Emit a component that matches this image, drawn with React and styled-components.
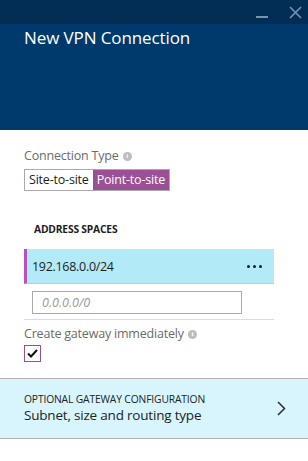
import React from "react";
import styled, { createGlobalStyle } from "styled-components";

const Global = createGlobalStyle`
  html, body { margin: 0; padding: 0; background: #fff; }
  body { font-family: "Open Sans", "Noto Sans", sans-serif; }
  * { box-sizing: border-box; }
`;

const Blade = styled.div`
  width: 308px;
  height: 461px;
  background: #fff;
  display: flex;
  flex-direction: column;
  overflow: hidden;
`;

const TopBar = styled.div`
  height: 24px;
  background: #022d55;
  display: flex;
  justify-content: flex-end;
  align-items: center;
  gap: 20px;
  padding-right: 6px;
`;

const WinButton = styled.svg`
  width: 13px;
  height: 13px;
  display: block;
`;

const Header = styled.div`
  height: 106px;
  background: #003a6c;
  padding: 2px 24px 0;
`;

const Title = styled.h1`
  margin: 0;
  font-family: "Open Sans", sans-serif;
  font-weight: 400;
  font-size: 17px;
  line-height: 24px;
  color: #fff;
  letter-spacing: -0.1px;
`;

const Body = styled.div`
  display: flex;
  flex-direction: column;
  padding: 18px 34px 0 24px;
`;

const Label = styled.div`
  font-size: 12.5px;
  color: #6b6b6b;
  line-height: 16px;
  display: flex;
  align-items: center;
  gap: 4px;
  letter-spacing: -0.2px;
`;

const Info = styled.span`
  width: 9px;
  height: 9px;
  border-radius: 50%;
  background: #bdbdbd;
  color: #fff;
  font-size: 7px;
  font-weight: 700;
  line-height: 9px;
  text-align: center;
  font-family: "Liberation Serif", serif;
`;

const Toggle = styled.div`
  display: flex;
  margin-top: 5px;
  border: 1px solid #a9a9a9;
  align-self: flex-start;
`;

const ToggleOption = styled.div`
  height: 20px;
  padding: 0 4px;
  font-size: 12.5px;
  line-height: 20px;
  letter-spacing: -0.2px;
  color: ${(p) => (p.$active ? "#fff" : "#1e1e1e")};
  background: ${(p) => (p.$active ? "#9b4f97" : "#fff")};
`;

const SectionTitle = styled.div`
  margin-top: 32px;
  padding-left: 10px;
  font-size: 10.3px;
  font-weight: 700;
  color: #1e1e1e;
  line-height: 12px;
  letter-spacing: -0.2px;
`;

const AddressRow = styled.div`
  margin-top: 14px;
  height: 35px;
  background: #b3eaf8;
  border-left: 3px solid #b84fc4;
  border-bottom: 1px solid #c9c9c9;
  display: flex;
  align-items: center;
  justify-content: space-between;
  padding: 0 12px 0 5px;
  font-size: 12.5px;
  color: #1e1e1e;
  letter-spacing: -0.3px;
`;

const Dots = styled.span`
  display: flex;
  gap: 3px;
  & > i {
    width: 3px;
    height: 3px;
    border-radius: 50%;
    background: #1e1e1e;
  }
`;

const InputWrap = styled.div`
  padding: 7px 0 5px 8px;
  border-bottom: 1px solid #dcdcdc;
`;

const Input = styled.input`
  display: block;
  width: 210px;
  height: 23px;
  border: 1px solid #a9a9a9;
  padding: 0 9px;
  font-family: "Open Sans", sans-serif;
  font-size: 12.5px;
  outline: none;
  &::placeholder {
    color: #9a9a9a;
    font-style: italic;
  }
`;

const GatewayLabel = styled(Label)`
  margin-top: 6px;
`;

const Checkbox = styled.div`
  margin-top: 3px;
  width: 17px;
  height: 17px;
  border: 1px solid #9b4f97;
  display: flex;
  align-items: center;
  justify-content: center;
`;

const OptionalBar = styled.div`
  margin-top: 16px;
  height: 61px;
  background: #d8f5fe;
  border-top: 1px solid #b0b0b0;
  border-bottom: 1px solid #b0b0b0;
  display: flex;
  align-items: center;
  justify-content: space-between;
  padding: 0 22px 0 24px;
`;

const OptionalText = styled.div`
  display: flex;
  flex-direction: column;
  gap: 1px;
`;

const OptionalCaption = styled.div`
  font-size: 10.3px;
  color: #222;
  line-height: 12px;
  letter-spacing: -0.15px;
`;

const OptionalSub = styled.div`
  font-size: 13.5px;
  color: #222;
  line-height: 19px;
  letter-spacing: -0.2px;
`;

export default function App() {
  return (
    <>
      <Global />
      <Blade>
        <TopBar>
          <WinButton viewBox="0 0 13 13">
            <rect x="0" y="10" width="12" height="2" fill="#7a93ad" />
          </WinButton>
          <WinButton viewBox="0 0 13 13">
            <path d="M1 1 L12 12 M12 1 L1 12" stroke="#7a93ad" strokeWidth="1.6" />
          </WinButton>
        </TopBar>
        <Header>
          <Title>New VPN Connection</Title>
        </Header>
        <Body>
          <Label>
            Connection Type <Info>i</Info>
          </Label>
          <Toggle>
            <ToggleOption>Site-to-site</ToggleOption>
            <ToggleOption $active>Point-to-site</ToggleOption>
          </Toggle>
          <SectionTitle>ADDRESS SPACES</SectionTitle>
          <AddressRow>
            <span>192.168.0.0/24</span>
            <Dots>
              <i />
              <i />
              <i />
            </Dots>
          </AddressRow>
          <InputWrap>
            <Input placeholder="0.0.0.0/0" />
          </InputWrap>
          <GatewayLabel>
            Create gateway immediately <Info>i</Info>
          </GatewayLabel>
          <Checkbox>
            <svg width="11" height="9" viewBox="0 0 11 9">
              <path d="M1 4.5 L4 7.5 L10 1" fill="none" stroke="#111" strokeWidth="2" />
            </svg>
          </Checkbox>
        </Body>
        <OptionalBar>
          <OptionalText>
            <OptionalCaption>OPTIONAL GATEWAY CONFIGURATION</OptionalCaption>
            <OptionalSub>Subnet, size and routing type</OptionalSub>
          </OptionalText>
          <svg width="9" height="15" viewBox="0 0 9 15">
            <path d="M1 1 L7.5 7.5 L1 14" fill="none" stroke="#333" strokeWidth="1.6" />
          </svg>
        </OptionalBar>
      </Blade>
    </>
  );
}
